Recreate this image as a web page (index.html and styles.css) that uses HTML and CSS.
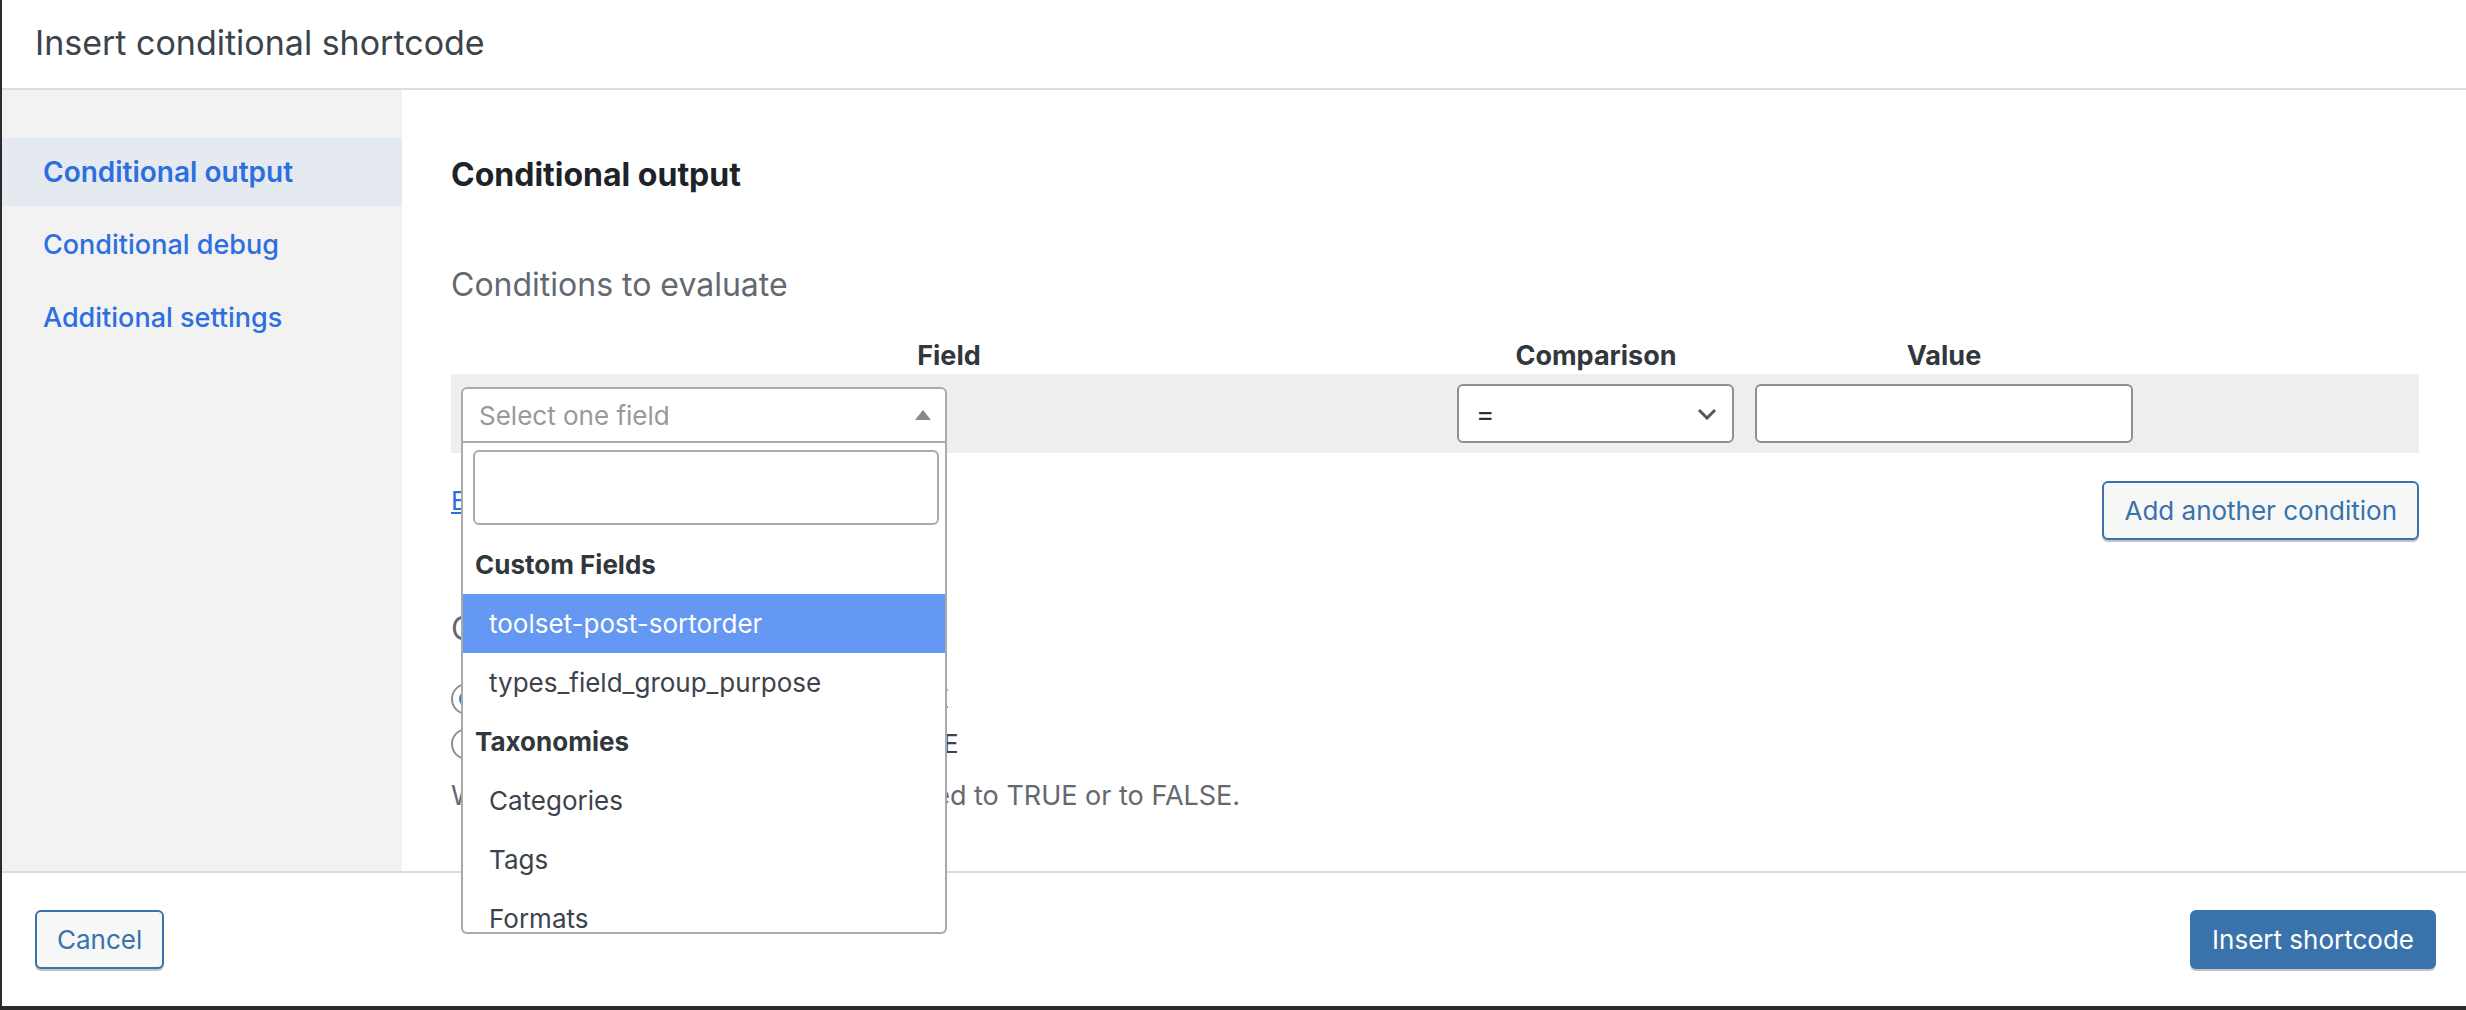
FILE: index.html
```html
<!DOCTYPE html>
<html lang="en">
<head>
    <meta charset="UTF-8">
    <meta name="viewport" content="width=device-width, initial-scale=1.0">
    <title>Insert conditional shortcode</title>
    <link rel="stylesheet" href="styles.css">
</head>
<body>
    <div class="dialog">
        <div class="dialog-title">Insert conditional shortcode</div>

        <div class="dialog-body">
            <nav class="tabs">
                <a class="tab active" href="#">Conditional output</a>
                <a class="tab" href="#">Conditional debug</a>
                <a class="tab" href="#">Additional settings</a>
            </nav>

            <div class="panel">
                <h2 class="panel-title">Conditional output</h2>
                <h3 class="section-title">Conditions to evaluate</h3>

                <div class="conditions">
                    <div class="col-head">Field</div>
                    <div class="col-head">Comparison</div>
                    <div class="col-head">Value</div>
                    <div class="col-head"></div>

                    <div class="cond-row">
                        <div class="cell">
                            <div class="select2 open">
                                <div class="select2-selection">
                                    <span class="placeholder">Select one field</span>
                                    <span class="select2-arrow"></span>
                                </div>
                                <div class="select2-dropdown">
                                    <div class="select2-search">
                                        <input type="text" class="search-field">
                                    </div>
                                    <ul class="results">
                                        <li class="group-label">Custom Fields</li>
                                        <li class="option highlighted">toolset-post-sortorder</li>
                                        <li class="option">types_field_group_purpose</li>
                                        <li class="group-label">Taxonomies</li>
                                        <li class="option">Categories</li>
                                        <li class="option">Tags</li>
                                        <li class="option">Formats</li>
                                    </ul>
                                </div>
                            </div>
                        </div>
                        <div class="cell">
                            <div class="compare-select">
                                <span>=</span>
                                <svg width="20" height="12" viewBox="0 0 20 12"><path d="M2 2l8 8 8-8" fill="none" stroke="#50575e" stroke-width="3"/></svg>
                            </div>
                        </div>
                        <div class="cell">
                            <input type="text" class="value-input">
                        </div>
                        <div class="cell"></div>
                    </div>
                </div>

                <div class="cond-actions">
                    <a href="#" class="manual-link">Edit conditions manually</a>
                    <button type="button" class="btn">Add another condition</button>
                </div>

                <h3 class="section-title output-title">Conditional content</h3>
                <label class="radio-row"><span class="radio checked"></span>Show the output if evaluated to TRUE</label>
                <label class="radio-row"><span class="radio"></span>Show the output if evaluated to FALSE</label>
                <p class="description">Whether to print the content if evaluated to TRUE or to FALSE.</p>
            </div>
        </div>

        <div class="dialog-footer">
            <button type="button" class="btn">Cancel</button>
            <button type="button" class="btn btn-primary">Insert shortcode</button>
        </div>
    </div>
</body>
</html>
```

FILE: styles.css
```css
body {
    margin: 0;
    background-color: #2b2b2b;
    font-family: Inter, 'Liberation Sans', Arial, sans-serif;
    color: #3c434a;
}
.dialog {
    margin-left: 2px;
    height: 1006px;
    background-color: white;
    display: flex;
    flex-direction: column;
    overflow: hidden;
}
.dialog-title {
    flex: none;
    box-sizing: border-box;
    height: 90px;
    padding: 0 0 4px 33px;
    display: flex;
    align-items: center;
    border-bottom: 2px solid #dcdcde;
    font-size: 34px;
    color: #3c434a;
}
.dialog-body {
    flex: 1;
    display: flex;
    min-height: 0;
}
.dialog-footer {
    flex: none;
    height: 133px;
    padding: 0 30px 0 33px;
    display: flex;
    align-items: center;
    justify-content: space-between;
    border-top: 2px solid #dcdcde;
    position: relative;
    z-index: 1;
}

/* left navigation */
.tabs {
    flex: none;
    width: 400px;
    padding-top: 48px;
    background-color: #f2f2f2;
}
.tab {
    display: block;
    height: 68px;
    line-height: 68px;
    margin-bottom: 5px;
    padding-left: 41px;
    font-size: 27px;
    font-weight: 500;
    color: #2d6fdf;
    text-decoration: none;
}
.tab.active {
    font-size: 28px;
    font-weight: 600;
    background-color: #e5eaf1;
}

/* main panel */
.panel {
    flex: 1;
    padding: 0 47px 0 49px;
    position: relative;
    z-index: 2;
}
.panel-title {
    margin: 65px 0 0;
    font-size: 32px;
    line-height: 40px;
    font-weight: 700;
    color: #1d2327;
}
.section-title {
    margin: 70px 0 0;
    font-size: 32px;
    line-height: 40px;
    font-weight: 400;
    color: #646970;
}
.conditions {
    margin-top: 33px;
    display: grid;
    grid-template-columns: 996px 298px 398px 1fr;
}
.col-head {
    height: 36px;
    line-height: 36px;
    text-align: center;
    font-size: 27px;
    font-weight: 700;
    color: #32373c;
}
.cond-row {
    grid-column: 1 / -1;
    display: grid;
    grid-template-columns: subgrid;
    align-items: center;
    height: 79px;
    background-color: #eeeeee;
}
.cell {
    padding: 0 10px;
}

/* select2 field picker */
.select2 {
    position: relative;
    width: 486px;
    margin-top: 3px;
}
.select2-selection {
    box-sizing: border-box;
    height: 56px;
    padding: 0 14px 0 16px;
    display: flex;
    align-items: center;
    justify-content: space-between;
    border: 2px solid #aaa;
    border-radius: 6px 6px 0 0;
    background-color: white;
}
.placeholder {
    font-size: 26px;
    color: #999;
}
.select2-arrow {
    width: 0;
    height: 0;
    border-left: 8px solid transparent;
    border-right: 8px solid transparent;
    border-bottom: 10px solid #888;
}
.select2-dropdown {
    position: absolute;
    top: 100%;
    left: 0;
    right: 0;
    height: 491px;
    box-sizing: border-box;
    overflow: hidden;
    border: 2px solid #aaa;
    border-top: none;
    border-radius: 0 0 6px 6px;
    background-color: white;
    z-index: 5;
}
.select2-search {
    padding: 7px 6px 10px 10px;
}
.search-field {
    display: block;
    box-sizing: border-box;
    width: 100%;
    height: 75px;
    border: 2px solid #aaa;
    border-radius: 6px;
    outline: none;
}
.results {
    list-style: none;
    margin: 0;
    padding: 0;
}
.results li {
    height: 59px;
    line-height: 59px;
    font-size: 26px;
    white-space: nowrap;
}
.group-label {
    padding-left: 12px;
    font-weight: 700;
    color: #32373c;
}
.option {
    padding-left: 26px;
    color: #3c434a;
}
.option.highlighted {
    background-color: #6598f2;
    color: white;
}

/* comparison and value */
.compare-select,
.value-input {
    box-sizing: border-box;
    height: 59px;
    border: 2px solid #8c8f94;
    border-radius: 6px;
    background-color: white;
}
.compare-select {
    width: 277px;
    padding: 0 15px 0 17px;
    display: flex;
    align-items: center;
    justify-content: space-between;
    font-size: 28px;
    color: #2c3338;
}
.value-input {
    display: block;
    width: 378px;
    outline: none;
}

.cond-actions {
    margin-top: 28px;
    display: flex;
    align-items: flex-start;
    justify-content: space-between;
}
.manual-link {
    line-height: 40px;
    font-size: 26px;
    color: #2d6fdf;
}

/* buttons */
.btn {
    height: 59px;
    padding: 0 20px;
    border: 2px solid #3a72ab;
    border-radius: 6px;
    background-color: #f6f7f7;
    box-shadow: 0 2px 0 #c3c4c7;
    font-family: inherit;
    font-size: 26px;
    color: #3a72ab;
}
.btn-primary {
    background-color: #3a72ab;
    color: white;
}

.output-title {
    margin-top: 69px;
}
.radio-row {
    display: flex;
    align-items: center;
    height: 45px;
    font-size: 26px;
    color: #3c434a;
}
.output-title + .radio-row {
    margin-top: 27px;
}
.radio {
    box-sizing: border-box;
    width: 32px;
    height: 32px;
    margin-right: 8px;
    border: 2px solid #8c8f94;
    border-radius: 50%;
    display: flex;
    align-items: center;
    justify-content: center;
}
.radio.checked::after {
    content: "";
    width: 16px;
    height: 16px;
    border-radius: 50%;
    background-color: #3582c4;
}
.description {
    margin: 10px 0 0;
    line-height: 40px;
    font-size: 27px;
    color: #646970;
}
```
